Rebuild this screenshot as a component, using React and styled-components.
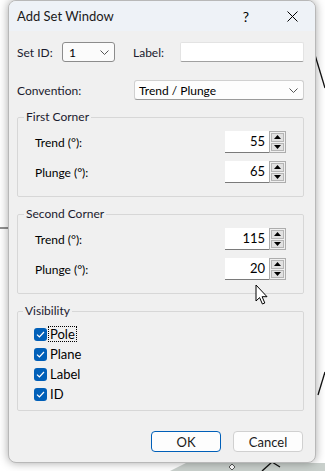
import styled, { createGlobalStyle } from "styled-components";

const GlobalStyle = createGlobalStyle`
  html, body {
    margin: 0;
    padding: 0;
    background: #ffffff;
    overflow: hidden;
  }
  body {
    font-family: Lato, "Noto Sans", sans-serif;
    font-size: 12px;
    color: #000;
  }
`;

function Chevron() {
  return (
    <svg width="9" height="5" viewBox="0 0 9 5">
      <path d="M0.5 0.5 L4.5 4.5 L8.5 0.5" fill="none" stroke="#555" strokeWidth="1" />
    </svg>
  );
}

function Check() {
  return (
    <svg width="9" height="7" viewBox="0 0 9 7">
      <path d="M1 3.6 L3.4 6 L8 1" fill="none" stroke="#fff" strokeWidth="1.2" />
    </svg>
  );
}

function Spin({ value }) {
  return (
    <SpinWrap>
      <NumberBox>{value}</NumberBox>
      <Arrows>
        <ArrowButton>
          <svg width="7" height="4" viewBox="0 0 7 4">
            <path d="M0 4 L3.5 0 L7 4 Z" fill="#000" />
          </svg>
        </ArrowButton>
        <ArrowButton>
          <svg width="7" height="4" viewBox="0 0 7 4">
            <path d="M0 0 L3.5 4 L7 0 Z" fill="#000" />
          </svg>
        </ArrowButton>
      </Arrows>
    </SpinWrap>
  );
}

function Corner({ title, trend, plunge, gap }) {
  return (
    <Group $gap={gap}>
      <Legend>{title}</Legend>
      <FieldRow>
        <span>Trend (°):</span>
        <Spin value={trend} />
      </FieldRow>
      <FieldRow>
        <span>Plunge (°):</span>
        <Spin value={plunge} />
      </FieldRow>
    </Group>
  );
}

const checks = ["Pole", "Plane", "Label", "ID"];

export default function App() {
  return (
    <Stage>
      <GlobalStyle />
      <Backdrop width="325" height="471" viewBox="0 0 325 471">
        <path d="M0 228 L8 228" stroke="#222" strokeWidth="1" />
        <path d="M315 55 L325 88" stroke="#111" strokeWidth="1.3" />
        <path d="M318 395 L325 372" stroke="#111" strokeWidth="1.3" />
        <path d="M170 471 L186 463 L325 463 L325 471 Z" fill="#c9d0cc" />
        <path d="M262 471 L272 462 L280 467" fill="none" stroke="#111" strokeWidth="1.4" />
        <path d="M232 464 L235 467 L232 470 L229 467 Z" fill="#fff" stroke="#333" strokeWidth="0.8" />
      </Backdrop>
      <Window>
        <TitleBar>
          <Title>Add Set Window</Title>
          <CaptionButton>?</CaptionButton>
          <CaptionButton>
            <svg width="11" height="11" viewBox="0 0 11 11">
              <path d="M0.5 0.5 L10.5 10.5 M10.5 0.5 L0.5 10.5" stroke="#000" strokeWidth="1" />
            </svg>
          </CaptionButton>
        </TitleBar>
        <Body>
          <TopRow>
            <LabelText $width={45}>Set ID:</LabelText>
            <Select $width={53}>
              <span>1</span>
              <Chevron />
            </Select>
            <LabelText $width={47} $indent={18}>
              Label:
            </LabelText>
            <TextInput />
          </TopRow>
          <ConventionRow>
            <LabelText $width={117}>Convention:</LabelText>
            <Select $width={170} $flat>
              <span>Trend / Plunge</span>
              <Chevron />
            </Select>
          </ConventionRow>
          <Corner title="First Corner" trend="55" plunge="65" gap={11} />
          <Corner title="Second Corner" trend="115" plunge="20" gap={11} />
          <Group $gap={11} $check>
            <Legend>Visibility</Legend>
            <CheckList>
              {checks.map((c, i) => (
                <CheckRow key={c}>
                  <CheckBox>
                    <Check />
                  </CheckBox>
                  <CheckLabel $focus={i === 0}>{c}</CheckLabel>
                </CheckRow>
              ))}
            </CheckList>
          </Group>
          <Footer>
            <Button $primary>OK</Button>
            <Button>Cancel</Button>
          </Footer>
        </Body>
      </Window>
      <Cursor width="14" height="22" viewBox="0 0 14 22">
        <path
          d="M1 1 L1 17 L4.6 13.6 L7.4 20 L9.8 19 L7.1 12.7 L12 12.7 Z"
          fill="#fff"
          stroke="#000"
          strokeWidth="1"
          strokeLinejoin="round"
        />
      </Cursor>
    </Stage>
  );
}

const Stage = styled.div`
  position: relative;
  width: 325px;
  height: 471px;
  overflow: hidden;
`;

const Backdrop = styled.svg`
  position: absolute;
  left: 0;
  top: 0;
`;

const Cursor = styled.svg`
  position: absolute;
  left: 255px;
  top: 284px;
`;

const Window = styled.div`
  position: relative;
  margin-left: 8px;
  width: 308px;
  height: 463px;
  border-radius: 8px;
  background: #f0f0f0;
  box-shadow: 0 0 10px rgba(0, 0, 0, 0.35);
  border: 1px solid #b8b8b8;
  box-sizing: border-box;
  overflow: hidden;
  display: flex;
  flex-direction: column;
`;

const TitleBar = styled.div`
  height: 30px;
  flex: none;
  display: flex;
  align-items: center;
  background: #eef2f7;
  padding-left: 8px;
`;

const Title = styled.div`
  flex: 1;
  font-size: 13px;
  color: #1a1a1a;
`;

const CaptionButton = styled.div`
  width: 46px;
  height: 30px;
  display: flex;
  align-items: center;
  justify-content: center;
  font-size: 14px;
  color: #000;
`;

const Body = styled.div`
  flex: 1;
  display: flex;
  flex-direction: column;
  padding: 11px 11px 0 8px;
`;

const TopRow = styled.div`
  display: flex;
  align-items: center;
  height: 20px;
`;

const ConventionRow = styled.div`
  display: flex;
  align-items: center;
  height: 20px;
  margin-top: 18px;
`;

const LabelText = styled.span`
  width: ${(p) => p.$width}px;
  margin-left: ${(p) => p.$indent || 0}px;
  flex: none;
  color: #1a1a2e;
`;

const Select = styled.div`
  width: ${(p) => p.$width}px;
  height: 20px;
  box-sizing: border-box;
  display: flex;
  align-items: center;
  justify-content: space-between;
  padding: 0 5px 0 ${(p) => (p.$flat ? 4 : 6)}px;
  background: ${(p) => (p.$flat ? "#fdfdfd" : "#fbfbfb")};
  border: 1px solid ${(p) => (p.$flat ? "#d0d0d0" : "#8c8c8c")};
  border-radius: 3px;
  ${(p) => p.$flat && "border-bottom-color: #9a9a9a;"}
`;

const TextInput = styled.div`
  width: 124px;
  height: 20px;
  box-sizing: border-box;
  background: #fff;
  border: 1px solid #e3e3e3;
  border-bottom-color: #a0a0a0;
  border-radius: 2px;
`;

const Group = styled.fieldset`
  margin: ${(p) => p.$gap}px 0 0 0;
  padding: ${(p) => (p.$check ? "7px 16px 6px 16px" : "8px 17px 13px 17px")};
  border: 1px solid #d7d7d7;
  border-radius: 2px;
  display: flex;
  flex-direction: column;
  gap: 8px;
  box-sizing: border-box;
`;

const Legend = styled.legend`
  padding: 0 2px;
  margin-left: -11px;
  color: #1a1a2e;
  line-height: 12px;
`;

const FieldRow = styled.div`
  display: flex;
  align-items: center;
  justify-content: space-between;
  height: 22px;
`;

const SpinWrap = styled.div`
  display: flex;
  height: 22px;
`;

const NumberBox = styled.div`
  width: 44px;
  box-sizing: border-box;
  background: #fff;
  border-bottom: 1px solid #7a7a7a;
  text-align: right;
  padding-right: 4px;
  line-height: 21px;
  font-size: 13px;
`;

const Arrows = styled.div`
  width: 17px;
  display: flex;
  flex-direction: column;
  border: 1px solid #adadad;
  box-sizing: border-box;
  padding: 1px;
  gap: 1px;
  background: #f0f0f0;
`;

const ArrowButton = styled.div`
  flex: 1;
  display: flex;
  align-items: center;
  justify-content: center;
  background: #e1e1e1;
  border: 1px solid #b5b5b5;
`;

const CheckList = styled.div`
  display: flex;
  flex-direction: column;
`;

const CheckRow = styled.div`
  display: flex;
  align-items: center;
  height: 20px;
`;

const CheckBox = styled.div`
  width: 13px;
  height: 13px;
  border-radius: 3px;
  background: #005fb8;
  display: flex;
  align-items: center;
  justify-content: center;
  flex: none;
`;

const CheckLabel = styled.span`
  margin-left: 2px;
  padding: 0 1px;
  line-height: 14px;
  font-size: 13px;
  outline: ${(p) => (p.$focus ? "1px dotted #000" : "none")};
`;

const Footer = styled.div`
  display: flex;
  justify-content: flex-end;
  gap: 12px;
  margin-top: 20px;
  padding-right: 1px;
`;

const Button = styled.div`
  width: 70px;
  height: 21px;
  box-sizing: border-box;
  display: flex;
  align-items: center;
  justify-content: center;
  background: #fdfdfd;
  border: 1px solid ${(p) => (p.$primary ? "#005fb8" : "#d0d0d0")};
  border-radius: 4px;
  color: #1a1a1a;
  font-size: 13px;
`;
